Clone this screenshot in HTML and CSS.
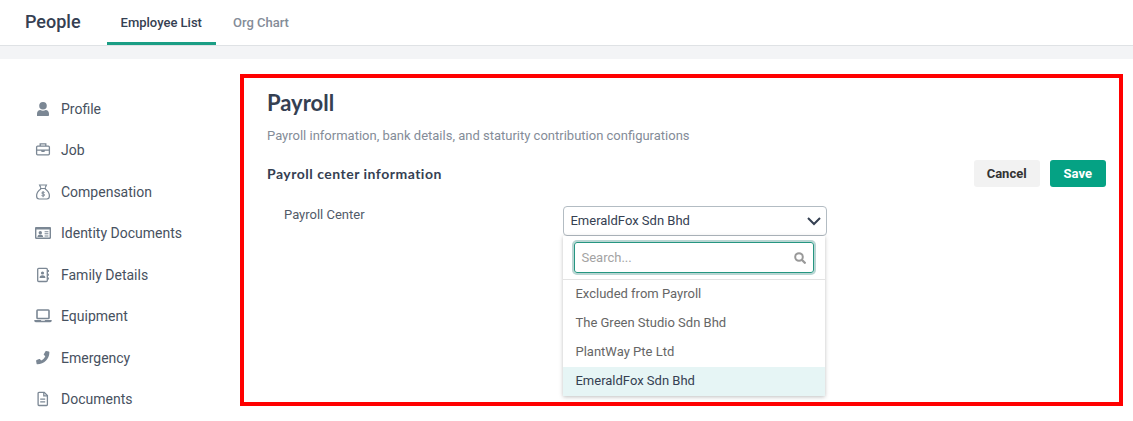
FILE: index.html
```html
<!DOCTYPE html>
<html lang="en">
<head>
<meta charset="utf-8">
<meta name="viewport" content="width=device-width, initial-scale=1">
<title>People – Payroll</title>
<link rel="stylesheet" href="styles.css">
</head>
<body>
<header class="topbar">
  <h1 class="topbar-title">People</h1>
  <nav class="tabs" aria-label="People sections">
    <a class="tab tab-active" href="#list" aria-current="page">Employee List</a>
    <a class="tab" href="#chart">Org Chart</a>
  </nav>
</header>
<div class="layout">
  <nav class="sidebar" aria-label="Employee details">
    <a class="side-link" href="#profile">
      <svg class="side-icon" viewBox="0 0 18 16"><path fill="currentColor" d="M9 1a3.800 3.800 0 1 1 0 7.600A3.800 3.800 0 0 1 9 1zM3 15v-2.200C3 10.300 4.500 9 6.300 9c1.700.9 3.700.9 5.400 0C13.500 9 15 10.300 15 12.800V14c0 .6-.4 1-1 1z"/></svg>
      Profile</a>
    <a class="side-link" href="#job">
      <svg class="side-icon" viewBox="0 0 18 16" fill="none" stroke="currentColor" stroke-width="1.300"><rect x="2.600" y="4.200" width="12.800" height="8.600" rx="1"/><path d="M6.200 4V1.800h5.600V4M2.600 8.200h12.800"/><path d="M7 8.200h4v1l-1 .8H8l-1-.8z" fill="currentColor" stroke="none"/></svg>
      Job</a>
    <a class="side-link" href="#compensation">
      <svg class="side-icon" viewBox="0 0 18 16" fill="none" stroke="currentColor" stroke-width="1.200"><path d="M6.800 3.800 5.600 1h6.800l-1.200 2.800M6 4.500h6M7 4.800C4.400 6.600 2.600 9.400 2.600 12c0 2 .9 3 2.600 3h7.600c1.700 0 2.600-1 2.600-3 0-2.600-1.800-5.400-4.400-7.200"/><path d="M10.600 8.500c-.5-.5-2.900-.7-2.900.5 0 1.300 3 .7 3 2 0 1.200-2.600 1-3.200.4M9.100 7.200v6" stroke-width="1"/></svg>
      Compensation</a>
    <a class="side-link" href="#identity">
      <svg class="side-icon" viewBox="0 0 18 16"><path fill="currentColor" fill-rule="evenodd" d="M2.200 2h13.600c.8 0 1.200.5 1.200 1.200v9.600c0 .7-.4 1.200-1.200 1.200H2.200C1.400 14 1 13.500 1 12.800V3.200C1 2.500 1.400 2 2.200 2zM2.400 4.600v8h13.200v-8z"/><circle cx="6.300" cy="7.700" r="1.700" fill="currentColor"/><path fill="currentColor" d="M3.500 12c0-1.700.8-2.300 2.800-2.300S9.100 10.300 9.100 12zM10.600 6.200h3.800v1h-3.800zM10.600 8.300h3.800v1h-3.800zM10.600 10.400h3.800v1h-3.800z"/></svg>
      Identity Documents</a>
    <a class="side-link" href="#family">
      <svg class="side-icon" viewBox="0 0 18 16"><rect x="3.700" y="1.300" width="9.600" height="13.200" rx="1" fill="none" stroke="currentColor" stroke-width="1.300"/><circle cx="8.500" cy="6" r="1.600" fill="currentColor"/><path fill="currentColor" d="M5.600 11c0-2 .8-2.800 2.900-2.800s2.900.8 2.900 2.800zM13.900 3h1v2h-1zM13.900 6.800h1v2h-1zM13.900 10.600h1v2h-1z"/></svg>
      Family Details</a>
    <a class="side-link" href="#equipment">
      <svg class="side-icon" viewBox="0 0 18 16"><rect x="3" y="2" width="12" height="8.500" rx=".7" fill="none" stroke="currentColor" stroke-width="1.600"/><path fill="currentColor" d="M.3 12h6.500c.2.600.4.800.8.800h2.800c.4 0 .6-.2.800-.8h6.500v.6c0 .9-.6 1.600-1.500 1.600H1.800C.9 14.200.3 13.500.3 12.600z"/></svg>
      Equipment</a>
    <a class="side-link" href="#emergency">
      <svg class="side-icon" viewBox="0 0 18 16"><path fill="currentColor" d="m12.300 1.100 2.500.4c.4.100.6.400.6.800 0 6.700-5.400 12-12 12-.4 0-.7-.2-.8-.6L2.100 11c-.1-.4.100-.7.500-.9l2.600-1.100c.3-.1.700 0 .9.200l1 1.300c2-.9 3.400-2.400 4.200-4.300L10 5.100c-.3-.2-.4-.6-.2-.9l1.600-2.700c.2-.3.500-.5.900-.4z"/></svg>
      Emergency</a>
    <a class="side-link" href="#documents">
      <svg class="side-icon" viewBox="0 0 18 16" fill="none" stroke="currentColor" stroke-width="1.300"><path d="M5 1.300h5.200l3.200 3.200v9c0 .6-.3 1-.9 1H5c-.6 0-.9-.4-.9-1V2.300c0-.6.300-1 .9-1z"/><path d="M9.800 1.500v3.300h3.400M6.200 8.100h5M6.200 10.900h5"/></svg>
      Documents</a>
  </nav>
  <main class="panel">
    <h2 class="panel-title">Payroll</h2>
    <p class="panel-text">Payroll information, bank details, and staturity contribution configurations</p>
    <div class="section-head">
      <h3 class="section-title">Payroll center information</h3>
      <div class="actions">
        <button class="btn" type="button">Cancel</button>
        <button class="btn btn-primary" type="button">Save</button>
      </div>
    </div>
    <div class="field">
      <label class="field-label" for="center">Payroll Center</label>
      <div class="picker">
        <button class="picker-toggle" id="center" type="button" aria-haspopup="listbox" aria-expanded="true">
          EmeraldFox Sdn Bhd
          <svg class="chevron" viewBox="0 0 14 10"><path d="m1 2 6 6 6-6" fill="none" stroke="currentColor" stroke-width="2"/></svg>
        </button>
        <div class="menu">
          <div class="search">
            <input class="search-input" type="text" placeholder="Search..." aria-label="Search payroll centers">
            <svg class="search-icon" viewBox="0 0 12 12"><circle cx="5" cy="5" r="3.800" fill="none" stroke="currentColor" stroke-width="2"/><path d="m8 8 2.800 2.800" stroke="currentColor" stroke-width="2.300" stroke-linecap="round"/></svg>
          </div>
          <ul class="options" role="listbox" aria-label="Payroll Center">
            <li class="option" role="option">Excluded from Payroll</li>
            <li class="option" role="option">The Green Studio Sdn Bhd</li>
            <li class="option" role="option">PlantWay Pte Ltd</li>
            <li class="option option-selected" role="option" aria-selected="true">EmeraldFox Sdn Bhd</li>
          </ul>
        </div>
      </div>
    </div>
  </main>
</div>
</body>
</html>
```
FILE: styles.css
```css
* { box-sizing: border-box; }
body {
  margin: 0;
  background: #fff;
  color: #354052;
  font: 13px/20px Roboto, "Liberation Sans", sans-serif;
}
h1, h2, h3, p, ul { margin: 0; padding: 0; }
a { color: inherit; text-decoration: none; }
svg { display: block; flex: none; }

.topbar {
  display: flex;
  gap: 26px;
  height: 46px;
  padding-left: 25px;
  border-bottom: 1px solid #dfe2e5;
}
.topbar-title {
  font-size: 18px;
  font-weight: 500;
  line-height: 43px;
}
.tabs { display: flex; gap: 3px; }
.tab {
  padding: 0 14px;
  border-bottom: 3px solid transparent;
  color: #848c98;
  font-weight: 500;
  line-height: 45px;
}
.tab-active { border-color: #1b9e85; color: #354052; }

.layout {
  display: grid;
  grid-template-columns: 240px minmax(0, 1fr);
  align-items: start;
  padding: 15px 10px 15px 0;
  border-top: 13px solid #f3f4f6;
}
.sidebar {
  display: flex;
  flex-direction: column;
  justify-content: space-between;
  min-height: 310px;
  margin-top: 25px;
  padding-left: 34px;
  color: #475160;
  font-size: 14px;
}
.side-link { display: flex; align-items: center; gap: 9px; }
.side-icon { width: 18px; height: 16px; color: #7b8794; }

.panel {
  min-height: 332px;
  padding: 11px 13px 20px 23px;
  border: 4px solid #f00;
}
.panel-title {
  font: bold 22px/28px Lato, sans-serif;
}
.panel-text { margin-top: 9px; color: #848c98; }
.section-head {
  display: flex;
  align-items: center;
  justify-content: space-between;
  margin-top: 14px;
}
.section-title { font: bold 14px/20px Lato, sans-serif; letter-spacing: 0.5px; }
.actions { display: flex; gap: 10px; }
.btn {
  height: 27px;
  padding: 0 13px;
  border: 0;
  border-radius: 3px;
  background: #f2f2f2;
  color: #333;
  font: bold 13px/20px Roboto, sans-serif;
}
.btn-primary { padding: 0 14px; background: #05a284; color: #fff; }

.field {
  display: grid;
  grid-template-columns: 34% 1fr;
  margin-top: 19px;
  padding-left: 17px;
}
.field-label { line-height: 18px; color: #525b69; }
.picker { position: relative; width: 264px; }
.picker-toggle {
  display: flex;
  align-items: center;
  justify-content: space-between;
  width: 100%;
  height: 30px;
  padding: 0 5px 0 6px;
  border: 1px solid #b3bcc3;
  border-radius: 4px;
  background: #fff;
  color: #354052;
  font: 13px/20px Roboto, sans-serif;
}
.chevron { width: 14px; height: 10px; }
.menu {
  position: absolute;
  top: 100%;
  left: 0;
  right: 2px;
  background: #fff;
  box-shadow: 0 1px 4px rgba(0, 0, 0, 0.25);
}
.search {
  display: flex;
  align-items: center;
  margin: 6px 11px;
  padding: 0 7px 0 6px;
  border: 1px solid #259681;
  border-radius: 3px;
  box-shadow: 0 0 0 2px #b9d6d3;
}
.search-input {
  flex: 1;
  min-width: 0;
  height: 29px;
  padding: 0;
  border: 0;
  outline: 0;
  background: transparent;
  font: 13px/20px Roboto, sans-serif;
}
.search-input::placeholder { color: #a3a3a3; }
.search-icon { width: 12px; height: 12px; color: #999; }
.options { border-top: 1px solid #e3e3e3; list-style: none; }
.option { padding: 4px 12px 5px; color: #666; }
.option-selected { background: #e6f5f5; color: #354052; }
```
